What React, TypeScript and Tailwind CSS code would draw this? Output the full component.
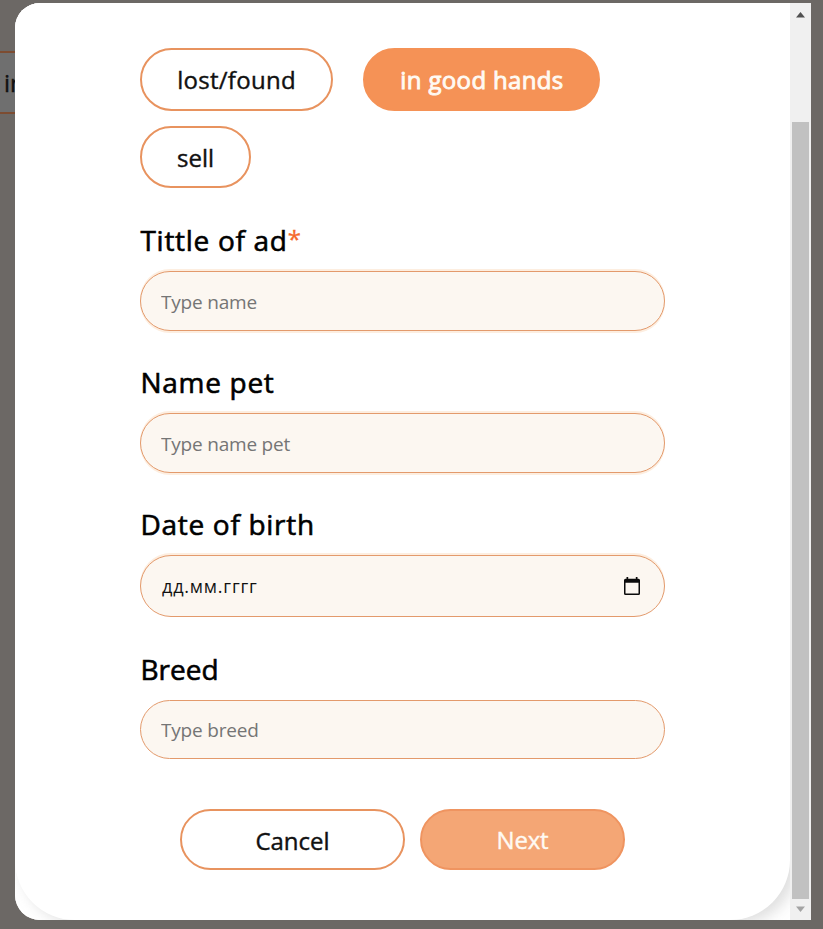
import React from "react";

type FieldProps = {
  label: string;
  required?: boolean;
  labelClass: string;
  boxClass: string;
  children: React.ReactNode;
};

function Field({ label, required, labelClass, boxClass, children }: FieldProps) {
  return (
    <label className="block">
      <span
        className={`flex h-[40px] whitespace-nowrap pl-[0.5px] text-[28px] leading-[40px] text-black [-webkit-text-stroke:0.6px_#000] ${labelClass}`}
      >
        {label}
        {required && (
          <span className="text-[24px] leading-[37px] tracking-normal text-[#f5692b] [-webkit-text-stroke:0.3px_#f5692b]">*</span>
        )}
      </span>
      <span
        className={`flex items-center justify-between rounded-[40px] border border-[#e39a6c] bg-[#fcf7f1] pl-[20px] pr-[24px] ${boxClass}`}
      >
        {children}
      </span>
    </label>
  );
}

function CalendarIcon() {
  return (
    <svg width="16" height="18" viewBox="0 0 16 18" className="mb-px">
      <path
        fill="#0b0b0b"
        fillRule="evenodd"
        d="M2.500 0h1.700v1.700h7.600V0h1.700v1.700h1A1.500 1.500 0 0 1 16 3.200v13.300a1.500 1.500 0 0 1-1.500 1.500h-13A1.500 1.500 0 0 1 0 16.500V3.200a1.500 1.500 0 0 1 1.500-1.500h1zM1.500 5.800v10.700h13V5.800z"
      />
    </svg>
  );
}

const pill =
  "flex items-center justify-center whitespace-nowrap rounded-[40px] border-2 text-[24px]";
const darkText = "text-[#111] [-webkit-text-stroke:0.4px_#111]";
const inputText =
  "relative top-px w-full bg-transparent text-[19px] tracking-[-0.2px] text-[#757575] outline-none placeholder:text-[#757575]";
const halo = "shadow-[0_2px_0_#fdeee0,0_-2px_0_#fdeee0]";

export default function App() {
  return (
    <div className="relative h-[929px] w-[823px] overflow-hidden bg-[#6c6865] pt-[51px] font-['Open_Sans','Noto_Sans',sans-serif]">
      <div className={`flex h-[63px] w-[120px] items-center border-y-2 border-[#7d4c31] bg-[#6f6f6f] pl-[4px] text-[24px] ${darkText}`}>
        in good
      </div>

      <div className="absolute top-[3px] left-[15px] flex h-[917px] w-[796px] overflow-hidden rounded-l-[25px] bg-white">
        <div className="w-[775px] overflow-hidden bg-white">
          <form className="h-[917px] rounded-b-[60px] bg-white px-[125px] pt-[45px] shadow-[7px_4px_14px_rgba(136,136,136,0.27)]">
            <div className="flex flex-wrap gap-x-[30px] gap-y-[15px]">
              <button type="button" className={`${pill} ${darkText} h-[63px] w-[193px] border-[#e8935f] tracking-[0.28px]`}>
                lost/found
              </button>
              <button
                type="button"
                className={`${pill} h-[63px] w-[237px] border-[#f59256] bg-[#f59256] pl-px tracking-[0.35px] text-[#fffaf3] [-webkit-text-stroke:0.9px_#fffaf3]`}
              >
                in good hands
              </button>
              <button type="button" className={`${pill} ${darkText} h-[62px] w-[111px] border-[#e8935f] pt-px`}>
                sell
              </button>
            </div>

            <div className="mt-[32px] flex w-[525px] flex-col">
              <Field label="Tittle of ad" required labelClass="tracking-[0.7px]" boxClass={`mt-[11px] h-[60px] ${halo}`}>
                <input placeholder="Type name" className={inputText} />
              </Field>
              <div className="h-[31px]" />
              <Field label="Name pet" labelClass="tracking-[0.7px]" boxClass={`mt-[11px] h-[60px] ${halo}`}>
                <input placeholder="Type name pet" className={inputText} />
              </Field>
              <div className="h-[31px]" />
              <Field label="Date of birth" labelClass="tracking-[0.7px]" boxClass="mt-[11px] h-[62px] shadow-[0_-2px_0_#fdeee0]">
                <span className="pl-px pt-px text-[18px] tracking-[0.8px] text-[#111]">дд.мм.гггг</span>
                <CalendarIcon />
              </Field>
              <div className="h-[32px]" />
              <Field label="Breed" labelClass="tracking-[0px]" boxClass="mt-[11px] h-[59px]">
                <input placeholder="Type breed" className={inputText} />
              </Field>
            </div>

            <div className="mt-[50px] flex justify-center gap-[15px]">
              <button type="button" className={`${pill} ${darkText} h-[61px] w-[225px] border-[#e8935f] pt-[2px]`}>
                Cancel
              </button>
              <button type="button" className={`${pill} h-[61px] w-[205px] border-[#ef9460] bg-[#f4a675] tracking-[-0.2px] text-[#fffaf3] [-webkit-text-stroke:0.4px_#fffaf3]`}>
                Next
              </button>
            </div>
          </form>
        </div>

        <div className="flex w-[21px] flex-col items-center bg-[#f0f0f0]">
          <div className="flex h-[119px] w-full justify-center pt-[9px]">
            <svg width="9" height="6" viewBox="0 0 9 6">
              <path d="M4.500 0L9 5.500H0z" fill="#505050" />
            </svg>
          </div>
          <div className="h-[777px] w-[17px] bg-[#c1c1c1]" />
          <svg className="mt-[7px]" width="9" height="6" viewBox="0 0 9 6">
            <path d="M0 .5h9L4.500 6z" fill="#a3a3a3" />
          </svg>
        </div>
      </div>
    </div>
  );
}
